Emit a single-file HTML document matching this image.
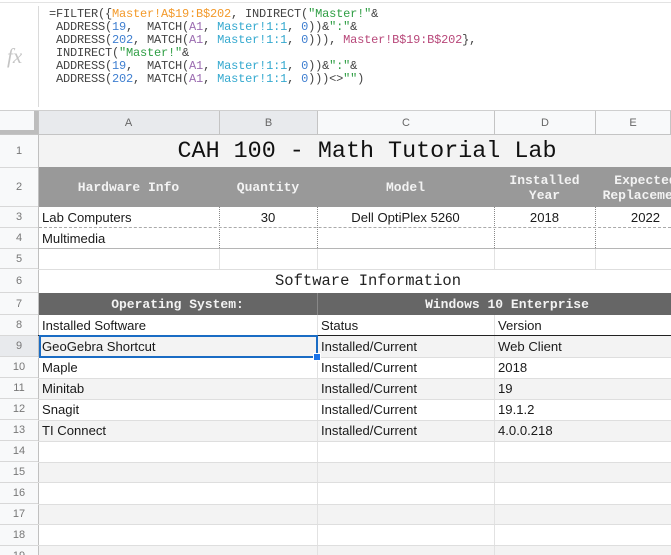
<!DOCTYPE html>
<html><head><meta charset="utf-8">
<style>
html,body{margin:0;padding:0;background:#fff;}
#p{position:relative;width:671px;height:555px;overflow:hidden;background:#fff;font-family:"Liberation Sans",sans-serif;}
#p div{position:absolute;box-sizing:border-box;}
.t{white-space:nowrap;font-size:13.1px;color:#1a1a1a;line-height:20px;height:20px;margin-top:1px;}
.c{text-align:center;}
.m{font-family:"Liberation Mono",monospace;white-space:nowrap;}
.f{left:49px;font-size:12px;line-height:13px;height:13px;color:#444;letter-spacing:-0.2px;white-space:pre;margin-top:1px;}
.rh{left:0;width:38px;text-align:center;font-size:11px;color:#777;background:#f8f9fa;border-bottom:1px solid #d8d8d8;}
.ch{top:111px;height:23px;line-height:24px;text-align:center;font-size:11px;color:#666;background:#f8f9fa;border-right:1px solid #c4c4c4;}
.hl{height:1px;left:38px;background:#dedede;}
.vl{width:1px;background:#e2e2e2;}
.o{color:#f39a2b}.g{color:#2f9e44}.b{color:#3f7fd0}.p{color:#9b6bb0}.y{color:#35a9cf}.r{color:#b8487a}
.hd{color:#f3f3f3;font-weight:bold;font-size:13px;text-align:center;line-height:15px;}
</style></head><body>
<div id="p">
<div style="left:0;top:2px;width:671px;height:1px;background:#e3e3e3"></div>
<div style="left:38px;top:6px;width:1px;height:101px;background:#dadada"></div>
<div style="left:7px;top:44px;width:20px;height:24px;font-family:'Liberation Serif',serif;font-style:italic;font-size:21px;line-height:24px;color:#c4c4c4">fx</div>
<div class="m f" style="top:7px">=FILTER({<span class="o">Master!A$19:B$202</span>, INDIRECT(<span class="g">"Master!"</span>&amp;</div>
<div class="m f" style="top:20px"> ADDRESS(<span class="b">19</span>,  MATCH(<span class="p">A1</span>, <span class="y">Master!1:1</span>, <span class="b">0</span>))&amp;<span class="g">":"</span>&amp;</div>
<div class="m f" style="top:33px"> ADDRESS(<span class="b">202</span>, MATCH(<span class="p">A1</span>, <span class="y">Master!1:1</span>, <span class="b">0</span>))), <span class="r">Master!B$19:B$202</span>},</div>
<div class="m f" style="top:46px"> INDIRECT(<span class="g">"Master!"</span>&amp;</div>
<div class="m f" style="top:59px"> ADDRESS(<span class="b">19</span>,  MATCH(<span class="p">A1</span>, <span class="y">Master!1:1</span>, <span class="b">0</span>))&amp;<span class="g">":"</span>&amp;</div>
<div class="m f" style="top:72px"> ADDRESS(<span class="b">202</span>, MATCH(<span class="p">A1</span>, <span class="y">Master!1:1</span>, <span class="b">0</span>)))&lt;&gt;<span class="g">""</span>)</div>

<div style="left:0;top:110px;width:671px;height:1px;background:#cfcfcf"></div>
<div style="left:0;top:111px;width:38px;height:23px;background:#f8f9fa;border-right:4px solid #bdbdbd;border-bottom:4px solid #bdbdbd"></div>
<div class="ch" style="left:38px;width:182px;background:#e8eaed">A</div>
<div class="ch" style="left:220px;width:98px;background:#e8eaed">B</div>
<div class="ch" style="left:318px;width:177px;">C</div>
<div class="ch" style="left:495px;width:101px;">D</div>
<div class="ch" style="left:596px;width:75px;">E</div>
<div style="left:0;top:134px;width:671px;height:1px;background:#c4c4c4"></div>

<!-- row backgrounds -->
<div style="left:38px;top:135px;width:633px;height:32px;background:#f3f3f3"></div>
<div style="left:38px;top:167px;width:633px;height:40px;background:#999"></div>
<div style="left:38px;top:293px;width:633px;height:22px;background:#666"></div>
<div style="left:38px;top:336px;width:633px;height:21px;background:#f3f3f3"></div>
<div style="left:38px;top:378px;width:633px;height:21px;background:#f3f3f3"></div>
<div style="left:38px;top:420px;width:633px;height:21px;background:#f3f3f3"></div>
<div style="left:38px;top:462px;width:633px;height:20px;background:#f3f3f3"></div>
<div style="left:38px;top:504px;width:633px;height:20px;background:#f3f3f3"></div>
<div style="left:38px;top:546px;width:633px;height:9px;background:#f3f3f3"></div>

<!-- row headers -->
<div class="rh" style="top:135px;height:33px;line-height:33px">1</div>
<div class="rh" style="top:168px;height:39px;line-height:39px">2</div>
<div class="rh" style="top:207px;height:21px;line-height:21px">3</div>
<div class="rh" style="top:228px;height:21px;line-height:21px">4</div>
<div class="rh" style="top:249px;height:20px;line-height:21px">5</div>
<div class="rh" style="top:269px;height:24px;line-height:24px">6</div>
<div class="rh" style="top:293px;height:22px;line-height:22px">7</div>
<div class="rh" style="top:315px;height:21px;line-height:21px">8</div>
<div class="rh" style="top:336px;height:21px;line-height:21px;background:#e8eaed">9</div>
<div class="rh" style="top:357px;height:21px;line-height:21px">10</div>
<div class="rh" style="top:378px;height:21px;line-height:21px">11</div>
<div class="rh" style="top:399px;height:21px;line-height:21px">12</div>
<div class="rh" style="top:420px;height:21px;line-height:21px">13</div>
<div class="rh" style="top:441px;height:21px;line-height:21px">14</div>
<div class="rh" style="top:462px;height:21px;line-height:21px">15</div>
<div class="rh" style="top:483px;height:21px;line-height:21px">16</div>
<div class="rh" style="top:504px;height:21px;line-height:21px">17</div>
<div class="rh" style="top:525px;height:21px;line-height:21px">18</div>
<div class="rh" style="top:546px;height:21px;line-height:21px">19</div>
<div style="left:38px;top:111px;width:1px;height:444px;background:#c0c0c0"></div>

<!-- grid lines -->
<div class="vl" style="left:219px;top:249px;height:20px"></div>
<div class="vl" style="left:317px;top:249px;height:20px"></div>
<div class="vl" style="left:494px;top:249px;height:20px"></div>
<div class="vl" style="left:595px;top:249px;height:20px"></div>
<div class="vl" style="left:317px;top:315px;height:240px"></div>
<div class="vl" style="left:494px;top:315px;height:240px"></div>
<div style="left:317px;top:293px;width:1px;height:22px;background:#888"></div>
<div style="left:219px;top:207px;height:41px;width:0;border-left:1px dotted #888"></div>
<div style="left:317px;top:207px;height:41px;width:0;border-left:1px dotted #888"></div>
<div style="left:494px;top:207px;height:41px;width:0;border-left:1px dotted #888"></div>
<div style="left:595px;top:207px;height:41px;width:0;border-left:1px dotted #888"></div>
<div style="left:39px;top:227px;width:632px;height:0;border-top:1px dashed #aaa"></div>
<div class="hl" style="top:248px;width:633px;background:#b5b5b5"></div>
<div class="hl" style="top:269px;width:633px"></div>
<div style="left:38px;top:335px;width:633px;height:1px;background:#222"></div>
<div class="hl" style="top:357px;width:633px"></div>
<div class="hl" style="top:378px;width:633px"></div>
<div class="hl" style="top:399px;width:633px"></div>
<div class="hl" style="top:420px;width:633px"></div>
<div class="hl" style="top:441px;width:633px"></div>
<div class="hl" style="top:462px;width:633px"></div>
<div class="hl" style="top:482px;width:633px"></div>
<div class="hl" style="top:504px;width:633px"></div>
<div class="hl" style="top:524px;width:633px"></div>
<div class="hl" style="top:545px;width:633px"></div>

<!-- title -->
<div class="m" style="left:38px;top:136px;width:658px;height:32px;line-height:32px;text-align:center;font-size:23.4px;color:#111">CAH 100 - Math Tutorial Lab</div>

<!-- header row -->
<div class="m hd" style="left:38px;top:180px;width:181px">Hardware Info</div>
<div class="m hd" style="left:219px;top:180px;width:98px">Quantity</div>
<div class="m hd" style="left:317px;top:180px;width:177px">Model</div>
<div class="m hd" style="left:494px;top:173px;width:101px">Installed<br>Year</div>
<div class="m hd" style="left:595px;top:173px;width:101px">Expected<br>Replacement</div>

<!-- rows 3,4 -->
<div class="t" style="left:42px;top:207px">Lab Computers</div>
<div class="t c" style="left:219px;top:207px;width:98px">30</div>
<div class="t c" style="left:317px;top:207px;width:177px">Dell OptiPlex 5260</div>
<div class="t c" style="left:494px;top:207px;width:101px">2018</div>
<div class="t c" style="left:595px;top:207px;width:101px">2022</div>
<div class="t" style="left:42px;top:228px">Multimedia</div>

<!-- software -->
<div class="m" style="left:38px;top:270px;width:660px;height:23px;line-height:23px;text-align:center;font-size:15.5px;color:#222">Software Information</div>
<div class="m hd" style="left:38px;top:297px;width:279px;">Operating System:</div>
<div class="m hd" style="left:318px;top:297px;width:378px;">Windows 10 Enterprise</div>

<div class="t" style="left:42px;top:315px">Installed Software</div>
<div class="t" style="left:321px;top:315px">Status</div>
<div class="t" style="left:498px;top:315px">Version</div>

<div class="t" style="left:42px;top:336px">GeoGebra Shortcut</div>
<div class="t" style="left:321px;top:336px">Installed/Current</div>
<div class="t" style="left:498px;top:336px">Web Client</div>
<div class="t" style="left:42px;top:357px">Maple</div>
<div class="t" style="left:321px;top:357px">Installed/Current</div>
<div class="t" style="left:498px;top:357px">2018</div>
<div class="t" style="left:42px;top:378px">Minitab</div>
<div class="t" style="left:321px;top:378px">Installed/Current</div>
<div class="t" style="left:498px;top:378px">19</div>
<div class="t" style="left:42px;top:399px">Snagit</div>
<div class="t" style="left:321px;top:399px">Installed/Current</div>
<div class="t" style="left:498px;top:399px">19.1.2</div>
<div class="t" style="left:42px;top:420px">TI Connect</div>
<div class="t" style="left:321px;top:420px">Installed/Current</div>
<div class="t" style="left:498px;top:420px">4.0.0.218</div>

<!-- selection -->
<div style="left:39px;top:335px;width:279px;height:23px;border:2px solid #1a6cc4"></div>
<div style="left:314px;top:354px;width:6px;height:6px;background:#1a73e8;outline:1px solid #fff"></div>
</div>
</body></html>
